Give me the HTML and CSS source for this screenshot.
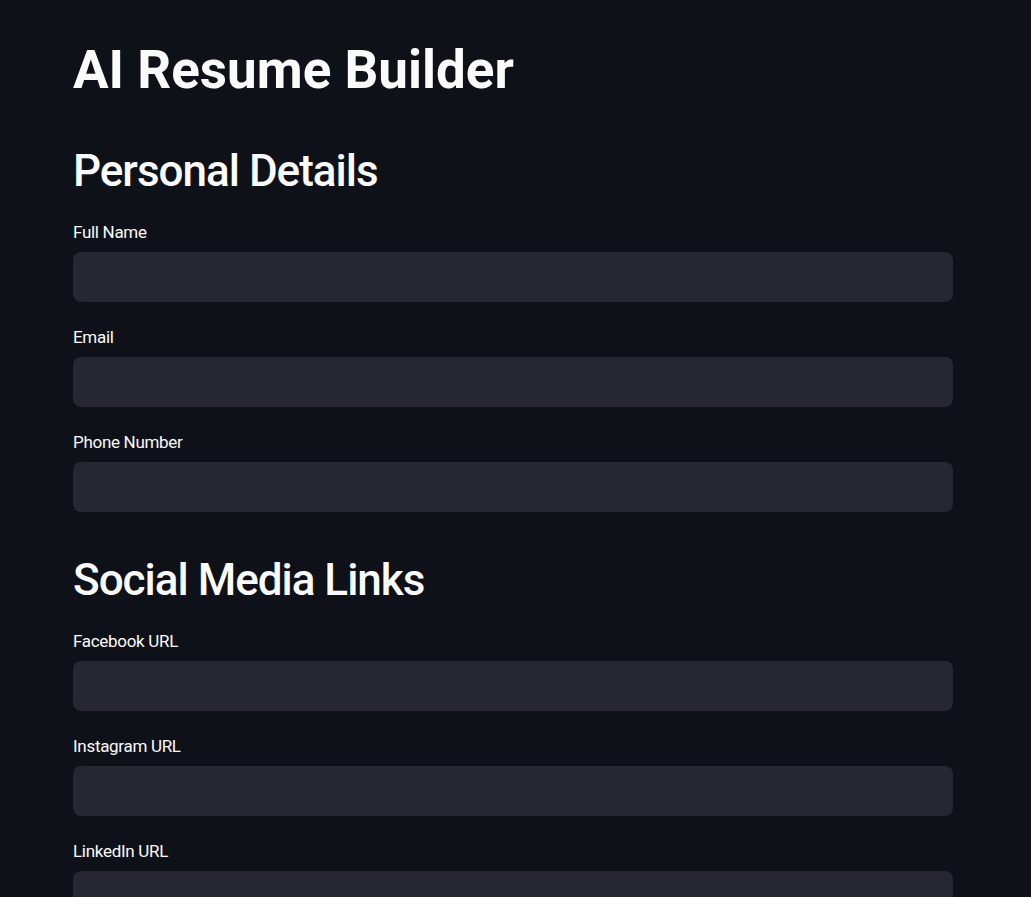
FILE: index.html
```html
<!DOCTYPE html>
<html lang="en">
<head>
<meta charset="utf-8">
<title>AI Resume Builder</title>
<link rel="stylesheet" href="styles.css">
</head>
<body>
<main class="app">
  <h1 class="title">AI Resume Builder</h1>
  <h2 class="section section-first">Personal Details</h2>
  <div class="field">
    <label class="label" for="name">Full Name</label>
    <input class="input" id="name" type="text">
  </div>
  <div class="field">
    <label class="label" for="email">Email</label>
    <input class="input" id="email" type="text">
  </div>
  <div class="field">
    <label class="label" for="phone">Phone Number</label>
    <input class="input" id="phone" type="text">
  </div>
  <h2 class="section">Social Media Links</h2>
  <div class="field">
    <label class="label" for="fb">Facebook URL</label>
    <input class="input" id="fb" type="text">
  </div>
  <div class="field">
    <label class="label" for="ig">Instagram URL</label>
    <input class="input" id="ig" type="text">
  </div>
  <div class="field">
    <label class="label" for="li">LinkedIn URL</label>
    <input class="input" id="li" type="text">
  </div>
</main>
</body>
</html>
```

FILE: styles.css
```css
html, body {
  margin: 0;
  padding: 0;
  background: #0e1117;
  color: #fafafa;
  font-family: Roboto, "Noto Sans", sans-serif;
  height: 100%;
  overflow: hidden;
}

.app {
  width: 880px;
  padding: 44px 0 0 73px;
  display: flex;
  flex-direction: column;
}

.title {
  margin: 0;
  font-size: 53px;
  line-height: 53px;
  font-weight: 700;
  height: 53px;
}

.section {
  margin: 23px 0 27px 0;
  font-size: 44px;
  line-height: 44px;
  height: 44px;
  font-weight: 500;
  letter-spacing: -1px;
}

.section-first {
  margin-top: 52px;
}

.field {
  display: flex;
  flex-direction: column;
  margin-bottom: 23px;
}

.label {
  font-size: 17px;
  line-height: 24px;
  height: 24px;
  margin-bottom: 8px;
  letter-spacing: -0.3px;
}

.input {
  box-sizing: border-box;
  height: 50px;
  width: 880px;
  border: none;
  border-radius: 8px;
  background: #262730;
  outline: none;
  padding: 0 12px;
  color: #fafafa;
  font-size: 16px;
}
```
